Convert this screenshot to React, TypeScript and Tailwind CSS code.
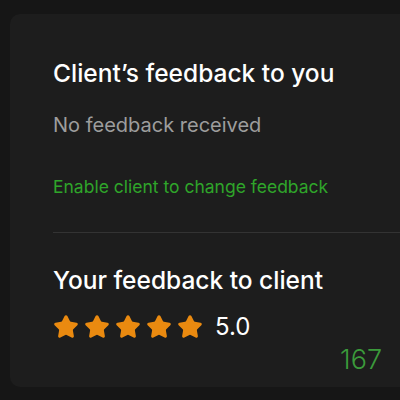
import { Star } from "lucide-react";

const stars = [1, 2, 3, 4, 5];

export default function App() {
  return (
    <div
      className="h-[400px] w-[400px] overflow-hidden bg-[#161616] pl-[10px] pt-[14px]"
      style={{ fontFamily: "Inter, 'Liberation Sans', sans-serif" }}
    >
      <div className="flex h-[373px] w-[420px] flex-col rounded-l-[10px] bg-[#1d1d1d] pl-[43px]">
        <h2 className="mt-[44px] text-[24.5px] font-medium leading-[30px] text-white">
          Client’s feedback to you
        </h2>
        <p className="mt-[25px] text-[20px] leading-[24px] text-[#9d9d9d]">
          No feedback received
        </p>
        <p className="mt-[39px] text-[17.5px] leading-[22px] text-[#2fa52a]">
          Enable client to change feedback
        </p>
        <div className="mt-[34px] h-px bg-[#333333]" />
        <h2 className="mt-[32px] text-[24.5px] font-medium leading-[30px] text-white">
          Your feedback to client
        </h2>
        <div className="mt-[17px] flex h-[30px] items-center">
          <div className="flex gap-[5px]">
            {stars.map((s) => (
              <Star
                key={s}
                size={26}
                fill="#ea8a10"
                color="#ea8a10"
                strokeWidth={1.8}
              />
            ))}
          </div>
          <span className="ml-[12px] text-[24px] leading-[30px] text-white">5.0</span>
        </div>
        <div className="mt-[2px] flex w-[329px] justify-end">
          <span className="text-[27px] font-light leading-[32px] text-[#3b9a3b]">167</span>
        </div>
      </div>
    </div>
  );
}
